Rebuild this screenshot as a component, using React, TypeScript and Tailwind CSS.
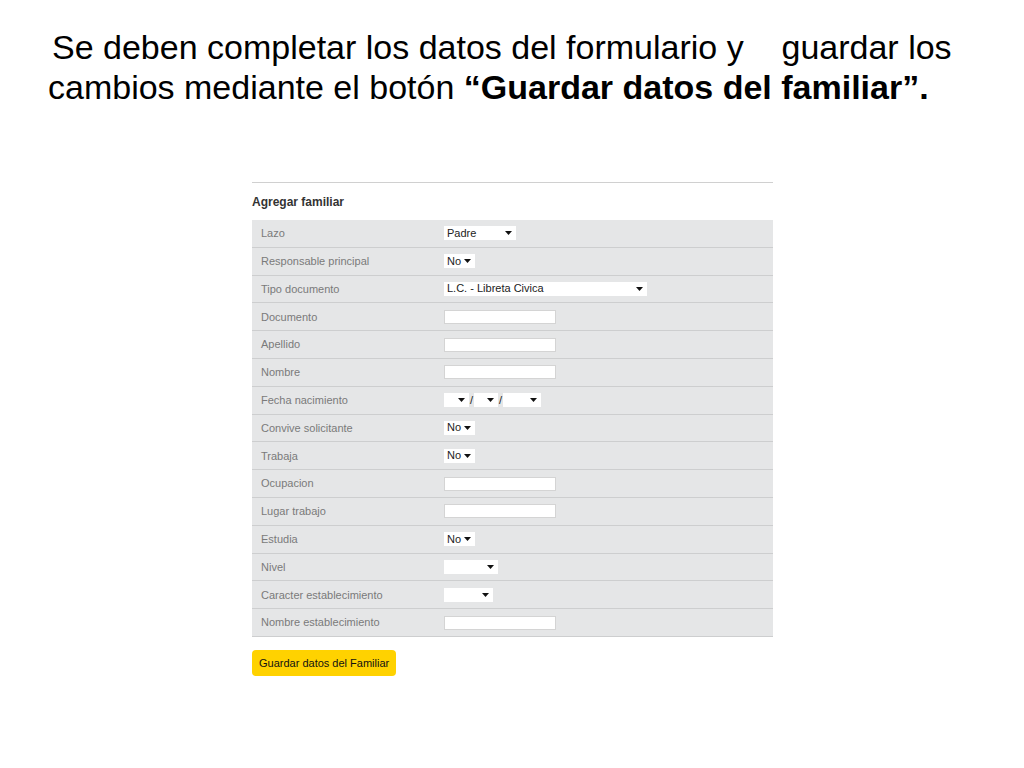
import React from "react";

const Arrow = () => (
  <svg width="7" height="4" viewBox="0 0 7 4" className="shrink-0">
    <path d="M0 0H7L3.5 4Z" fill="#111" />
  </svg>
);

const Select = ({ w, text }: { w: string; text?: string }) => (
  <div className={`${w} h-[14px] bg-white flex items-center justify-between pl-[3px] pr-[4px] text-[11px] leading-none text-[#222]`}>
    <span>{text ?? ""}</span>
    <Arrow />
  </div>
);

const Input = () => <div className="w-[112px] h-[14px] bg-white border border-[#d4d4d4]" />;

const rows: { label: string; ctrl: React.ReactNode }[] = [
  { label: "Lazo", ctrl: <Select w="w-[72px]" text="Padre" /> },
  { label: "Responsable principal", ctrl: <Select w="w-[31px]" text="No" /> },
  { label: "Tipo documento", ctrl: <Select w="w-[203px]" text="L.C. - Libreta Civica" /> },
  { label: "Documento", ctrl: <Input /> },
  { label: "Apellido", ctrl: <Input /> },
  { label: "Nombre", ctrl: <Input /> },
  {
    label: "Fecha nacimiento",
    ctrl: (
      <div className="flex items-center text-[11px] text-[#222] leading-none">
        <Select w="w-[25px]" />
        <span className="px-[1px]">/</span>
        <Select w="w-[24px]" />
        <span className="px-[1px]">/</span>
        <Select w="w-[38px]" />
      </div>
    ),
  },
  { label: "Convive solicitante", ctrl: <Select w="w-[31px]" text="No" /> },
  { label: "Trabaja", ctrl: <Select w="w-[31px]" text="No" /> },
  { label: "Ocupacion", ctrl: <Input /> },
  { label: "Lugar trabajo", ctrl: <Input /> },
  { label: "Estudia", ctrl: <Select w="w-[31px]" text="No" /> },
  { label: "Nivel", ctrl: <Select w="w-[54px]" /> },
  { label: "Caracter establecimiento", ctrl: <Select w="w-[49px]" /> },
  { label: "Nombre establecimiento", ctrl: <Input /> },
];

export default function App() {
  return (
    <div className="w-[1024px] h-[768px] bg-white relative overflow-hidden" style={{ fontFamily: '"Liberation Sans", Arial, sans-serif' }}>
      <div className="pt-[27px] pl-[48px] text-[34px] leading-[40px] text-black whitespace-pre">
        <div className="pl-[4px]">Se deben completar los datos del formulario y    guardar los</div>
        <div>
          cambios mediante el botón <b>“Guardar datos del familiar”.</b>
        </div>
      </div>

      <div className="ml-[252px] mt-[75px] w-[521px]">
        <div className="border-t border-[#d0d0d0]" />
        <div className="pt-[12px] pb-[11px] text-[12px] font-bold text-[#333] leading-[14px]">Agregar familiar</div>
        <div className="bg-[#e5e6e7]">
          {rows.map((r, i) => (
            <div key={i} className="h-[27.8px] flex items-center border-b border-[#cdcecf]">
              <div className="w-[192px] pl-[9px] text-[11px] text-[#7a7a7a]">{r.label}</div>
              <div>{r.ctrl}</div>
            </div>
          ))}
        </div>
        <div className="mt-[13px]">
          <div className="inline-flex items-center h-[26px] px-[7px] bg-[#ffd200] rounded-[4px] text-[11px] text-[#111]">
            Guardar datos del Familiar
          </div>
        </div>
      </div>
    </div>
  );
}
